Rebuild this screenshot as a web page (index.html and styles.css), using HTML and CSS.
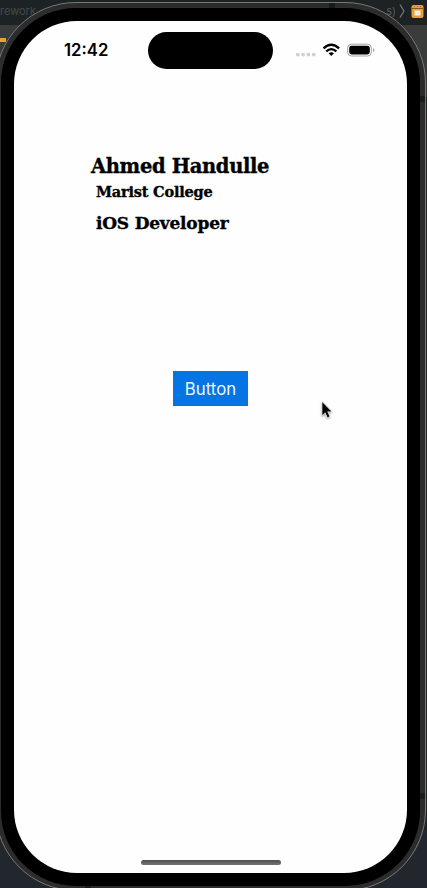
FILE: index.html
```html
<!DOCTYPE html>
<html lang="en">
<head>
<meta charset="utf-8">
<title>Profile</title>
<link rel="stylesheet" href="styles.css">
</head>
<body>
<div class="desktop">
  <div class="toolbar"><span class="path">rework</span><span class="crumb">s)</span>
    <svg class="chevron" width="7" height="16" viewBox="0 0 7 16"><path d="M1 1.5 5 8 1 14.5" fill="none" stroke="#7b8182" stroke-width="1.1"/></svg>
    <svg class="storyboard" width="13" height="13" viewBox="0 0 13 13"><rect x=".5" y="0" width="12" height="13" rx="2" fill="#e6a03a"/><path d="M1 3.5h11" stroke="#8c5915" stroke-width="1"/><path d="M3 1.5h1m2 0h1m2 0h1" stroke="#a66f20" stroke-width="1"/><rect x="3.5" y="5.5" width="6" height="5" fill="#f6eee0"/></svg>
  </div>
  <div class="sliver"></div>
  <div class="phone">
    <i class="seam seam-top"></i><i class="seam seam-right"></i><i class="seam seam-low"></i><i class="seam seam-bottom"></i>
    <div class="bezel">
      <main class="screen">
        <header class="status">
          <span class="time">12:42</span>
          <span class="island"></span>
          <svg class="indicators" width="80" height="16" viewBox="0 0 80 16">
            <g fill="#cfcfcf"><circle cx="2.8" cy="11.6" r="1.9"/><circle cx="8.1" cy="11.6" r="1.9"/><circle cx="13.4" cy="11.6" r="1.9"/><circle cx="18.7" cy="11.6" r="1.9"/></g>
            <g fill="none" stroke="#000" stroke-width="2.3"><path d="M28.5 5.3Q36.3-1.8 44.1 5.3"/><path d="M31.2 8.4Q36.3 3.9 41.4 8.4"/></g>
            <path d="M33.6 10.3Q36.3 8.2 39 10.3L36.3 13z"/>
            <rect x="52.7" y="1.2" width="23.6" height="11.8" rx="3.8" fill="none" stroke="#a2a2a2"/>
            <rect x="54.2" y="2.7" width="20.6" height="8.8" rx="2.4"/>
            <path d="M78 5.2q1.4.4 1.4 1.9T78 9z" fill="#a2a2a2"/>
          </svg>
        </header>
        <section class="profile">
          <h1 class="name">Ahmed Handulle</h1>
          <p class="school">Marist College</p>
          <p class="role">iOS Developer</p>
        </section>
        <button class="action" type="button">Button</button>
        <div class="home"></div>
      </main>
    </div>
  </div>
  <svg class="pointer" width="14" height="20" viewBox="0 0 14 20"><path d="M2 1.5v14.2l3.2-3 2.2 5 2.5-1.1-2.2-4.8h4.3z" fill="#000" stroke="#fff" stroke-width=".6"/></svg>
</div>
</body>
</html>
```
FILE: styles.css
```css
* { box-sizing: border-box; margin: 0; padding: 0; }
body { width: 427px; height: 888px; overflow: hidden; background: #22272d; }
.desktop {
  position: relative; width: 427px; height: 888px; overflow: hidden;
  background: linear-gradient(#1d2324 0 25px, #3a3b3b 25px 97px, #202326 97px 830px, #22272e 830px);
}
.toolbar { display: flex; align-items: center; height: 22px; padding: 0 3px 0 0; font: 11px/22px Inter, sans-serif; color: #44494a; }
.crumb { margin-left: auto; color: #555b5c; }
.chevron { margin: 0 5px 0 3px; }
.sliver { position: absolute; left: 0; top: 38px; width: 6px; height: 4px; background: #e6a52b; }
.phone {
  position: absolute; left: -5px; top: 2px; width: 431px; height: 889px;
  padding: 5px 5px 4px; border: 1px solid #777978; border-radius: 81px; background: #2c2c2c;
}
.seam { position: absolute; background: #191b1b; }
.seam-top { left: 333px; top: 0; width: 6px; height: 5px; }
.seam-right { right: 0; top: 93px; width: 5px; height: 6px; }
.seam-low { right: 0; top: 790px; width: 5px; height: 6px; }
.seam-bottom { left: 89px; bottom: 0; width: 6px; height: 5px; }
.bezel { position: relative; width: 419px; height: 878px; padding: 13px; border-radius: 75px; background: #000; }
.screen { display: flex; flex-direction: column; width: 393px; height: 852px; border-radius: 63px; background: #fefefe; overflow: hidden; }
.status { display: flex; height: 48px; padding: 11px 32px 0 50px; }
.time { width: 84px; font: 600 16.7px/37px Inter, sans-serif; }
.island { width: 125px; height: 37px; border-radius: 19px; background: #000; }
.indicators { margin: 11px 0 0 22px; flex: none; }
.profile { padding: 85px 0 0 77px; font-family: "DejaVu Serif", serif; font-weight: 700; color: #000; white-space: nowrap; -webkit-text-stroke: .35px #000; }
.name { font-size: 19.5px; line-height: 26px; letter-spacing: -.35px; }
.school { padding-left: 5px; font-size: 14.5px; line-height: 24px; letter-spacing: -.2px; }
.role { padding: 5px 0 0 5px; font-size: 17px; line-height: 28px; letter-spacing: -.2px; }
.action { width: 75px; height: 35px; margin: 134px 0 0 159px; padding-top: 1px; border: 0; background: #0675e3; color: #eef6ff; font: 400 16.8px/34px Inter, sans-serif; }
.home { width: 140px; height: 5px; margin: auto auto 8px 127px; border-radius: 3px; background: linear-gradient(#505050, #747474); }
.pointer { position: absolute; left: 320px; top: 400px; filter: drop-shadow(0 1px 1px #0006); }
```
